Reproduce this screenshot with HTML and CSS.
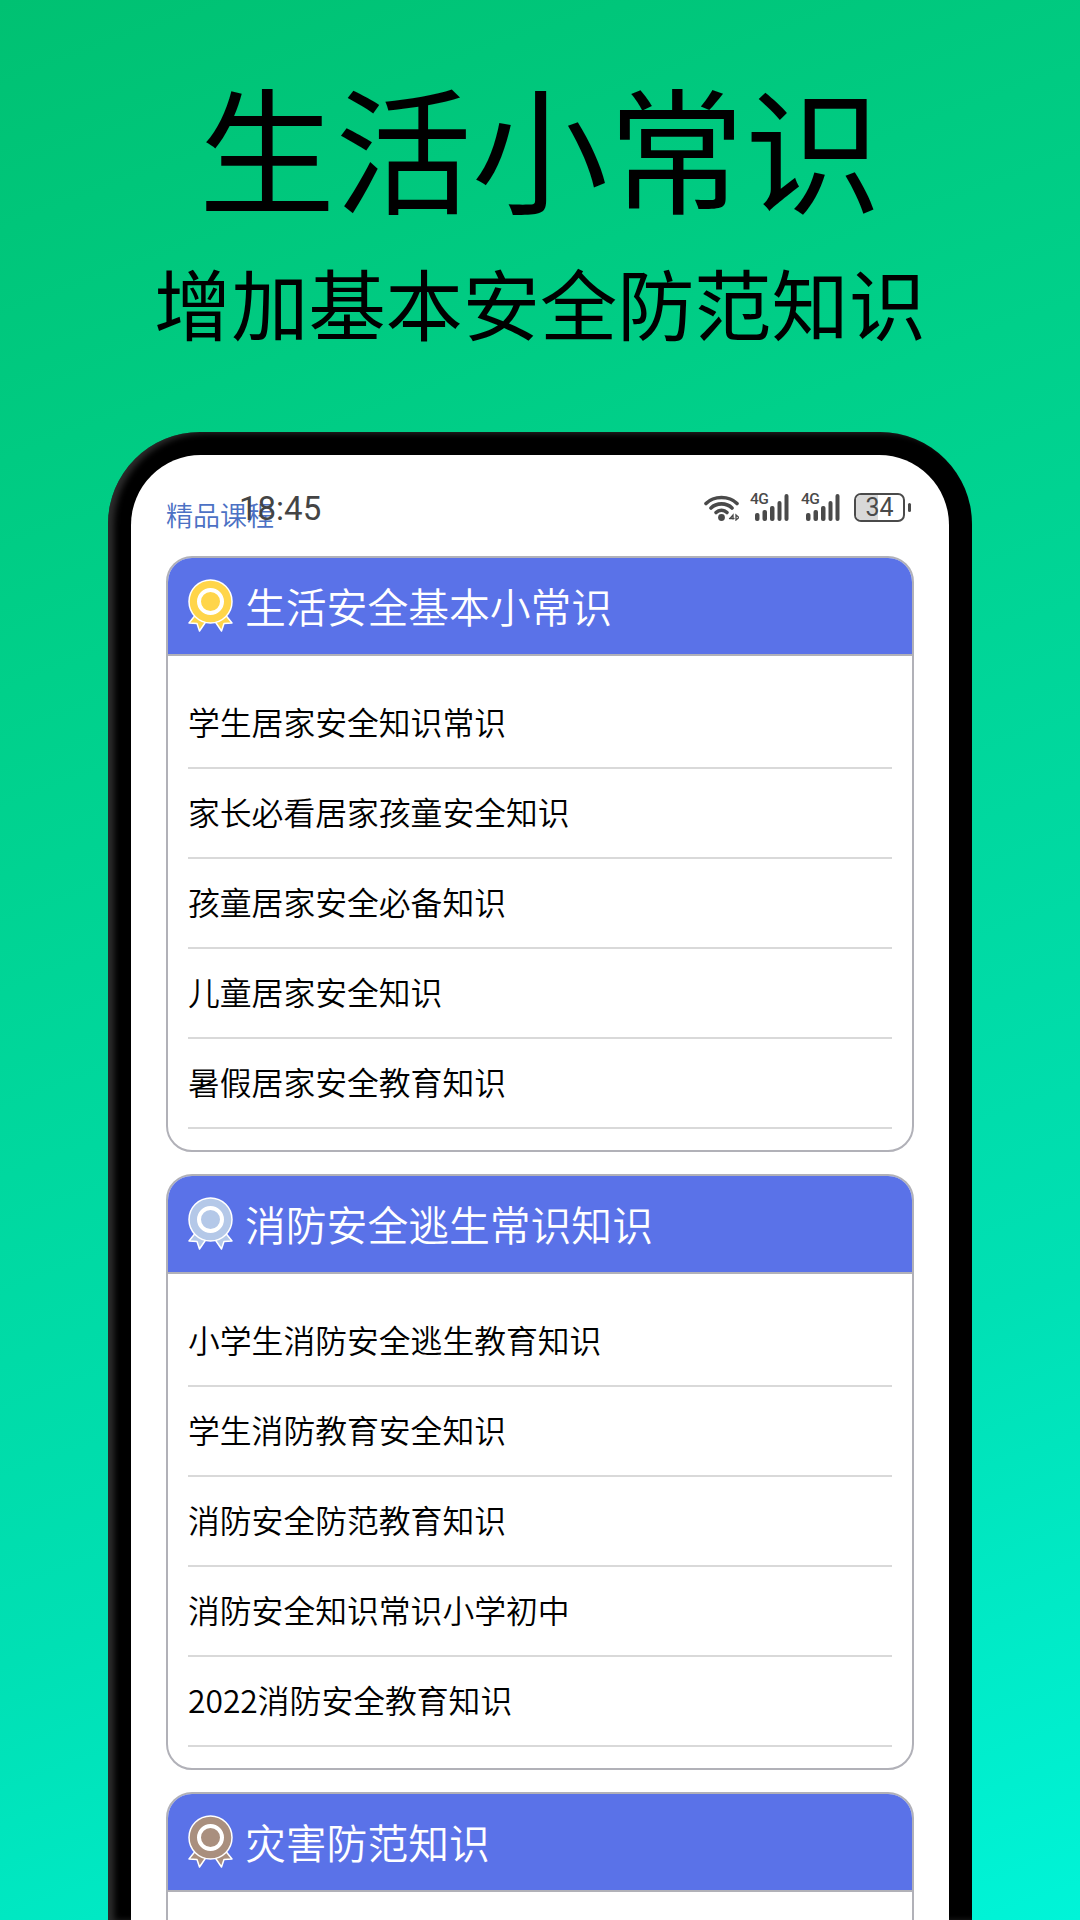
FILE: index.html
```html
<!DOCTYPE html>
<html lang="zh">
<head>
<meta charset="utf-8">
<title>生活小常识</title>
<link rel="stylesheet" href="styles.css">
</head>
<body>
<svg class="defs" width="0" height="0" aria-hidden="true">
  <symbol id="medal" viewBox="0 0 45 53">
    <path d="M9 34 L1 44 L9 44.500 L11.500 52 L19 41 Z" fill="var(--m)" stroke="#fff" stroke-width="1.500" stroke-linejoin="round"/>
    <path d="M36 34 L44 44 L36 44.500 L33.500 52 L26 41 Z" fill="var(--m)" stroke="#fff" stroke-width="1.500" stroke-linejoin="round"/>
    <circle cx="22.500" cy="22.500" r="21.500" fill="var(--m)" stroke="#fff" stroke-width="1.500"/>
    <circle cx="22.500" cy="22.500" r="11.500" fill="var(--m)" stroke="#fff" stroke-width="4"/>
  </symbol>
  <symbol id="signal" viewBox="0 0 41 27">
    <rect x="5" y="19" width="4.500" height="8" rx="2"/>
    <rect x="12.500" y="16" width="4.500" height="11" rx="2"/>
    <rect x="20" y="12" width="4.500" height="15" rx="2"/>
    <rect x="27.500" y="7" width="4" height="20" rx="2"/>
    <rect x="34.500" y="0" width="4" height="27" rx="2"/>
  </symbol>
</svg>

<header class="hero">
  <h1 class="hero-title">生活小常识</h1>
  <p class="hero-sub">增加基本安全防范知识</p>
</header>

<main class="phone">
  <div class="screen">
    <div class="status">
      <span class="time">18:45</span>
      <div class="status-icons">
        <svg class="wifi" viewBox="0 0 35 27" fill="none" stroke="#4a4a4a" stroke-width="3.600" stroke-linecap="round">
          <path d="M2 9.500 C10 1.500 25 1.500 33 9.500"/>
          <path d="M7 14 C12.500 8.500 22.500 8.500 28 14"/>
          <path d="M12 18.500 C15 15.500 20 15.500 23 18.500"/>
          <circle cx="17.500" cy="23.500" r="3.400" fill="#4a4a4a" stroke="none"/>
          <path d="M26 24.500 L29 21 V25 M25.500 24.500 H30 M32 21 V26 L35 23.500 Z" stroke-width="1.300"/>
        </svg>
        <div class="sig"><span class="g">4G</span><svg class="bars"><use href="#signal"/></svg></div>
        <div class="sig"><span class="g">4G</span><svg class="bars"><use href="#signal"/></svg></div>
        <div class="battery"><span class="level"></span><span class="pct">34</span></div>
        <span class="nub"></span>
      </div>
    </div>

    <div class="section-label">精品课程</div>

    <section class="card">
      <div class="card-head">
        <svg class="medal gold"><use href="#medal"/></svg>
        <h2>生活安全基本小常识</h2>
      </div>
      <ul class="list">
        <li>学生居家安全知识常识</li>
        <li>家长必看居家孩童安全知识</li>
        <li>孩童居家安全必备知识</li>
        <li>儿童居家安全知识</li>
        <li>暑假居家安全教育知识</li>
      </ul>
    </section>

    <section class="card">
      <div class="card-head">
        <svg class="medal silver"><use href="#medal"/></svg>
        <h2>消防安全逃生常识知识</h2>
      </div>
      <ul class="list">
        <li>小学生消防安全逃生教育知识</li>
        <li>学生消防教育安全知识</li>
        <li>消防安全防范教育知识</li>
        <li>消防安全知识常识小学初中</li>
        <li>2022消防安全教育知识</li>
      </ul>
    </section>

    <section class="card">
      <div class="card-head">
        <svg class="medal bronze"><use href="#medal"/></svg>
        <h2>灾害防范知识</h2>
      </div>
    </section>
  </div>
</main>
</body>
</html>
```
FILE: styles.css
```css
* { box-sizing: border-box; margin: 0; padding: 0; }
html, body { width: 1080px; height: 1920px; overflow: hidden; }
body {
  background: linear-gradient(160deg, #00c172 0%, #00d08a 30%, #00e0b4 72%, #00f4d8 100%);
  font-family: "Noto Sans CJK SC", "Noto Sans", sans-serif;
  font-weight: 400;
  color: #000;
  display: flex;
  flex-direction: column;
  align-items: center;
}
.defs { position: absolute; }

.hero { height: 432px; width: 100%; text-align: center; padding-top: 60px; }
.hero-title { font-size: 136.500px; line-height: 170px; font-weight: 400; }
.hero-sub { font-size: 77.200px; line-height: 100px; margin-top: 21px; }

.phone {
  width: 864px;
  height: 1488px;
  flex: none;
  padding: 23px 23px 0 23px;
  background: #000;
  border-radius: 92px 92px 0 0;
  box-shadow: inset 6px 1px 6px rgba(80,80,80,.55);
}
.screen {
  position: relative;
  height: 100%;
  padding: 0 35px;
  background: #fff;
  border-radius: 70px 70px 0 0;
  overflow: hidden;
}

.status {
  position: absolute;
  top: 34px; left: 108px; right: 38px;
  height: 40px;
  display: flex;
  justify-content: space-between;
  align-items: center;
  color: #444;
}
.time { font-family: "Roboto", sans-serif; font-size: 33px; font-weight: 400; line-height: 40px; }
.status-icons { display: flex; align-items: center; height: 30px; margin-top: -4px; }
.wifi { width: 35px; height: 27px; margin-right: 11px; }
.sig { position: relative; width: 41px; height: 27px; margin-right: 10px; }
.sig .g {
  position: absolute; left: 0; top: -3px;
  font: 500 15.500px/16px "Roboto", sans-serif;
  letter-spacing: -.5px;
  color: #4a4a4a;
}
.bars { display: block; width: 41px; height: 27px; fill: #4a4a4a; }
.battery {
  position: relative;
  width: 51px; height: 29px;
  margin-left: 2px;
  border: 2px solid #4a4a4a;
  border-radius: 7px;
  overflow: hidden;
  display: flex; align-items: center; justify-content: center;
}
.level { position: absolute; left: 0; top: 0; bottom: 0; width: 47%; background: #d8d8d8; }
.pct { position: relative; font: 400 25px/25px "Roboto", sans-serif; color: #4a4a4a; }
.nub { width: 3px; height: 9px; margin-left: 3px; background: #4a4a4a; border-radius: 2px; }

.section-label {
  padding-top: 42px;
  height: 101px;
  font-size: 27px;
  font-weight: 350;
  line-height: 36px;
  color: #4c71c4;
}

.card {
  border: 2px solid #b1b1b8;
  border-radius: 26px;
  overflow: hidden;
  height: 596px;
  margin-bottom: 22px;
}
.card-head {
  height: 98px;
  background: #5a72e8;
  border-bottom: 2px solid #b1b1b8;
  display: flex;
  align-items: center;
  padding-left: 20px;
  gap: 12px;
  color: #fff;
}
.card-head h2 { font-size: 40.800px; line-height: 56px; font-weight: 350; }
.medal { width: 45px; height: 53px; flex: none; margin-top: -2px; }
.gold { --m: #ffd54a; }
.silver { --m: #b4c8e8; }
.bronze { --m: #a98f7e; }

.list { list-style: none; padding: 23px 20px 0 20px; }
.list li {
  height: 90px;
  border-bottom: 2px solid #d9d9d9;
  font-size: 31.800px;
  font-weight: 350;
  line-height: 84px;
  color: #000;
}
```
